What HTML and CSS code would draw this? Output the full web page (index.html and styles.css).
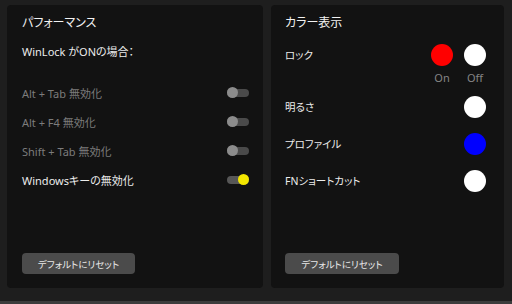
FILE: index.html
```html
<!DOCTYPE html>
<html lang="ja">
<head>
    <meta charset="UTF-8">
    <meta name="viewport" content="width=device-width, initial-scale=1.0">
    <title>設定</title>
    <link rel="stylesheet" href="styles.css">
</head>
<body>
    <div class="page">
        <div class="panel panel-left">
            <h2 class="panel-title">パフォーマンス</h2>
            <p class="subtitle">WinLock がONの場合：</p>

            <div class="option disabled">
                <span>Alt + Tab 無効化</span>
                <span class="toggle"></span>
            </div>
            <div class="option disabled">
                <span>Alt + F4 無効化</span>
                <span class="toggle"></span>
            </div>
            <div class="option disabled">
                <span>Shift + Tab 無効化</span>
                <span class="toggle"></span>
            </div>
            <div class="option">
                <span>Windowsキーの無効化</span>
                <span class="toggle on"></span>
            </div>

            <button class="btn-reset">デフォルトにリセット</button>
        </div>

        <div class="panel panel-right">
            <h2 class="panel-title">カラー表示</h2>

            <div class="color-row lock-row">
                <span class="color-label">ロック</span>
                <div class="swatches">
                    <div class="swatch-item">
                        <span class="swatch red"></span>
                        <span class="swatch-caption">On</span>
                    </div>
                    <div class="swatch-item">
                        <span class="swatch white"></span>
                        <span class="swatch-caption">Off</span>
                    </div>
                </div>
            </div>
            <div class="color-row">
                <span class="color-label">明るさ</span>
                <span class="swatch white"></span>
            </div>
            <div class="color-row">
                <span class="color-label">プロファイル</span>
                <span class="swatch blue"></span>
            </div>
            <div class="color-row">
                <span class="color-label">FNショートカット</span>
                <span class="swatch white"></span>
            </div>

            <button class="btn-reset">デフォルトにリセット</button>
        </div>
    </div>
    <div class="bottom-strip"></div>
</body>
</html>
```

FILE: styles.css
```css
body {
    font-family: "Noto Sans", "Noto Sans CJK JP", sans-serif;
    font-feature-settings: "palt";
    background-color: #1e1e1e;
    color: #e6e6e6;
    margin: 0;
    padding: 0;
    width: 512px;
    height: 304px;
    overflow: hidden;
}

.page {
    display: flex;
    gap: 8px;
    padding: 5px 8px 0 7px;
    height: 283px;
}

.panel {
    background-color: #121212;
    border-radius: 4px;
    display: flex;
    flex-direction: column;
    box-sizing: border-box;
    padding: 8px 14px 14px 15px;
}

.panel-left {
    width: 256px;
}

.panel-right {
    width: 233px;
    padding-right: 18px;
    padding-left: 14px;
}

.panel-title {
    margin: 0;
    font-size: 12px;
    font-weight: normal;
    line-height: 20px;
    color: #f2f2f2;
}

.subtitle {
    margin: 9px 0 16px 0;
    font-size: 11px;
    line-height: 20px;
    color: #ececec;
}

.option {
    height: 29px;
    display: flex;
    align-items: center;
    justify-content: space-between;
    font-size: 11px;
    color: #ececec;
}

.option.disabled {
    color: #7c7c7c;
}

.toggle {
    position: relative;
    width: 22px;
    height: 8px;
    border-radius: 4px;
    background-color: #4a4a4a;
}

.toggle::after {
    content: "";
    position: absolute;
    top: -1.5px;
    left: 0;
    width: 11px;
    height: 11px;
    border-radius: 50%;
    background-color: #8c8c8c;
}

.toggle.on {
    background-color: #575757;
}

.toggle.on::after {
    left: 11px;
    background-color: #f3e600;
}

.btn-reset {
    margin-top: auto;
    width: 113px;
    height: 21px;
    border: none;
    border-radius: 4px;
    background-color: #4b4b4b;
    color: #e8e8e8;
    font-family: inherit;
    font-feature-settings: "palt";
    font-size: 9.5px;
    padding: 0;
    cursor: pointer;
}

.panel-right .btn-reset {
    width: 114px;
}

.color-row {
    height: 37px;
    display: flex;
    align-items: center;
    justify-content: space-between;
    font-size: 10.5px;
    color: #ececec;
}

.color-row.lock-row {
    height: auto;
    align-items: flex-start;
    margin-top: 11px;
    margin-bottom: 3px;
}

.lock-row .color-label {
    line-height: 22px;
}

.swatches {
    display: flex;
    gap: 11px;
}

.swatch-item {
    display: flex;
    flex-direction: column;
    align-items: center;
}

.swatch {
    width: 22px;
    height: 22px;
    border-radius: 50%;
    display: block;
}

.swatch.red {
    background-color: #ff0000;
}

.swatch.white {
    background-color: #ffffff;
}

.swatch.blue {
    background-color: #0000ff;
}

.swatch-caption {
    margin-top: 5px;
    font-size: 11px;
    line-height: 14px;
    color: #858585;
}

.bottom-strip {
    margin-top: 13px;
    height: 3px;
    background-color: #3c3c3c;
}
```
